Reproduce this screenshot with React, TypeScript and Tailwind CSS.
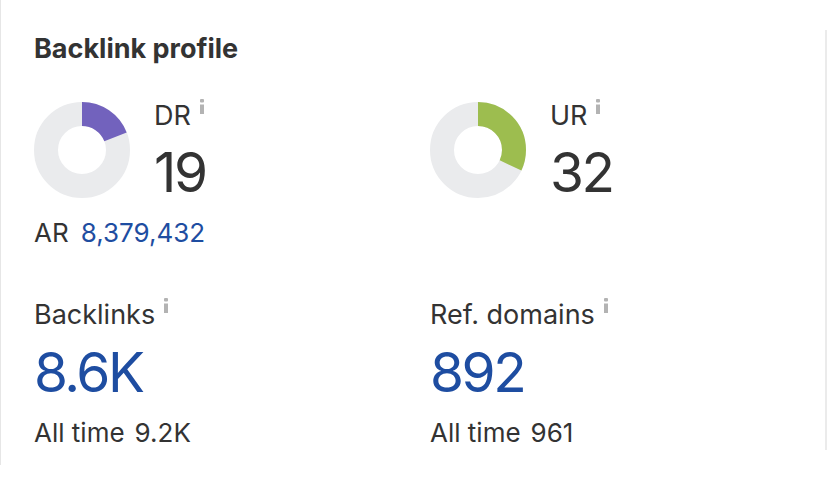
import React from "react";

interface Rating {
  label: string;
  value: number;
  color: string;
}

const R = 36;
const C = 2 * Math.PI * R;

function Donut({ value, color }: { value: number; color: string }) {
  return (
    <svg width="96" height="96" viewBox="0 0 96 96" className="shrink-0">
      <circle cx="48" cy="48" r={R} fill="none" stroke="#eaebed" strokeWidth="24" />
      <circle
        cx="48"
        cy="48"
        r={R}
        fill="none"
        stroke={color}
        strokeWidth="24"
        strokeDasharray={`${(C * value) / 100} ${C}`}
        transform="rotate(-90 48 48)"
      />
    </svg>
  );
}

// small superscript info mark
function Info() {
  return (
    <svg width="4" height="15" viewBox="0 0 4 15" className="ml-[9px] -mt-[3px] shrink-0">
      <rect x="0" y="0" width="4" height="3.5" rx="1" fill="#b3b3b3" />
      <rect x="0" y="5.5" width="4" height="9.5" fill="#b3b3b3" />
    </svg>
  );
}

function RatingBlock({ label, value, color }: Rating) {
  return (
    <div className="flex">
      <Donut value={value} color={color} />
      <div className="ml-[24px] flex flex-col">
        <div className="flex items-start">
          <span className="text-[27px] leading-none">{label}</span>
          <Info />
        </div>
        <div className="mt-[16px] text-[55px] leading-none tracking-[-0.045em]">{value}</div>
      </div>
    </div>
  );
}

function CountBlock({ label, value, allTime }: { label: string; value: string; allTime: string }) {
  return (
    <div className="flex flex-col">
      <div className="flex items-start">
        <span className="text-[27px] leading-none">{label}</span>
        <Info />
      </div>
      <div className="mt-[17px] text-[55px] leading-none tracking-[-0.045em] text-[#1e4da1]">
        {value}
      </div>
      <div className="mt-[20px] text-[26px] leading-none">
        All time<span className="ml-[10px]">{allTime}</span>
      </div>
    </div>
  );
}

export default function App() {
  return (
    <div className="flex h-[482px] w-[828px] bg-white font-['Inter',sans-serif] text-[#333]">
      <div className="h-[465px] w-[825px] border-l border-[#e6e6e6] pl-[33px] pt-[35px]">
        <h2 className="text-[27px] font-bold leading-none">Backlink profile</h2>

        <div className="mt-[40px] grid grid-cols-[396px_1fr]">
          <RatingBlock label="DR" value={19} color="#7262bd" />
          <RatingBlock label="UR" value={32} color="#9dbd4f" />
        </div>

        <div className="mt-[20px] text-[26px] leading-none">
          AR<span className="ml-[12px] text-[#1e4da1]">8,379,432</span>
        </div>

        <div className="mt-[55px] grid grid-cols-[396px_1fr]">
          <CountBlock label="Backlinks" value="8.6K" allTime="9.2K" />
          <CountBlock label="Ref. domains" value="892" allTime="961" />
        </div>
      </div>
      <div className="mt-[30px] h-[420px] w-[2px] bg-[#ebebeb]" />
    </div>
  );
}
